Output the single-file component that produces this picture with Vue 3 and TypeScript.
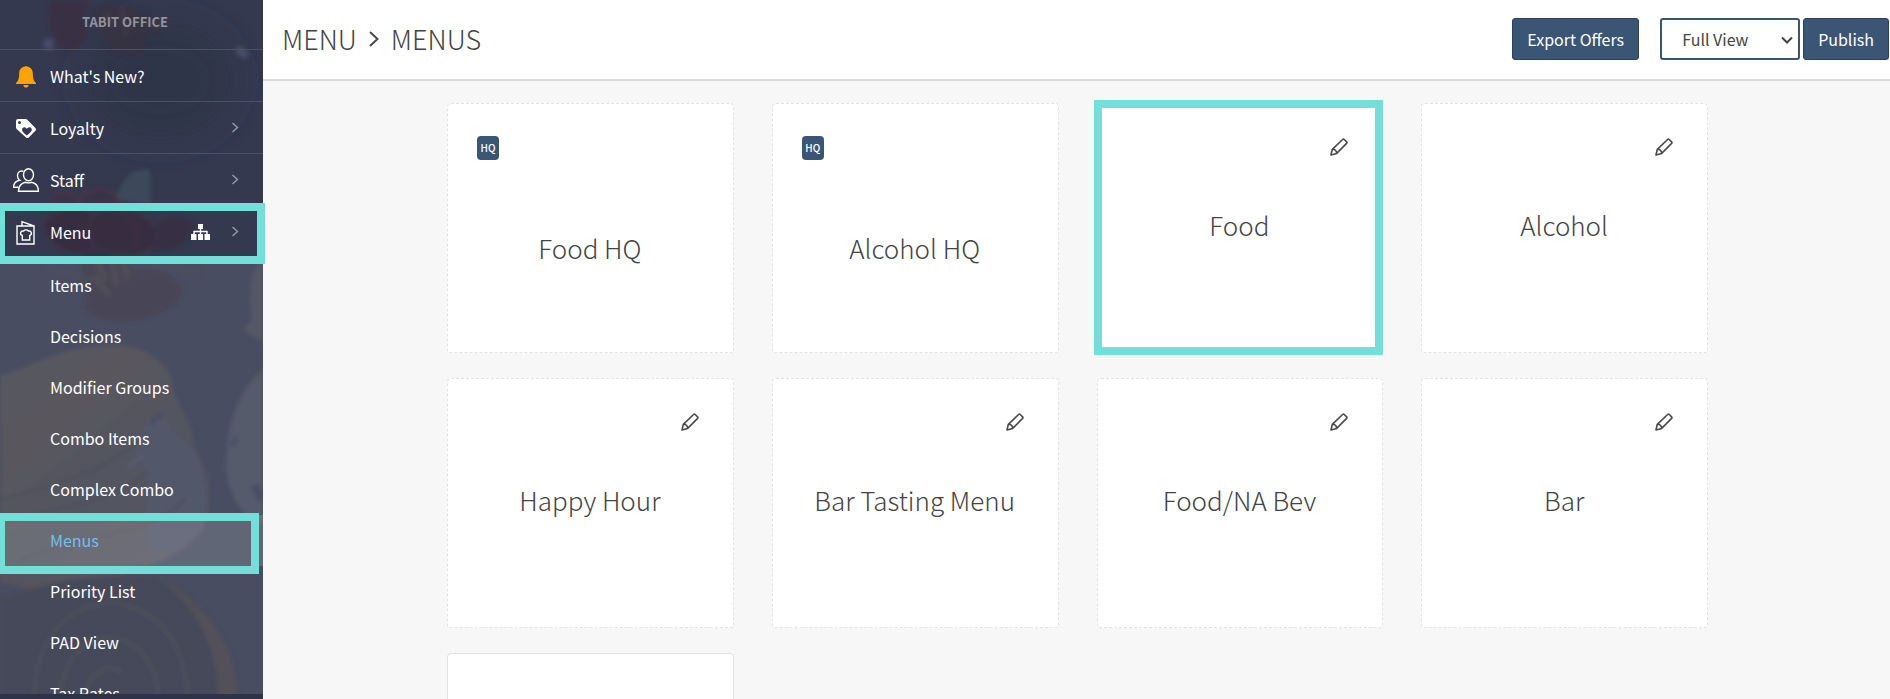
<script setup lang="ts">
import { ref } from 'vue'

interface NavItem { label: string; icon: 'bell' | 'tag' | 'staff' | 'menu'; expandable: boolean; marked?: boolean }
interface Tile { name: string; hq?: boolean; marked?: boolean }

const nav: NavItem[] = [
  { label: "What's New?", icon: 'bell', expandable: false },
  { label: 'Loyalty', icon: 'tag', expandable: true },
  { label: 'Staff', icon: 'staff', expandable: true },
  { label: 'Menu', icon: 'menu', expandable: true, marked: true },
]
const subNav: string[] = ['Items', 'Decisions', 'Modifier Groups', 'Combo Items', 'Complex Combo', 'Menus', 'Priority List', 'PAD View', 'Tax Rates']
const current = ref('Menus')
const view = ref('Full View')
const tiles: Tile[] = [
  { name: 'Food HQ', hq: true },
  { name: 'Alcohol HQ', hq: true },
  { name: 'Food', marked: true },
  { name: 'Alcohol' },
  { name: 'Happy Hour' },
  { name: 'Bar Tasting Menu' },
  { name: 'Food/NA Bev' },
  { name: 'Bar' },
]
</script>

<template>
  <div class="app">
    <aside class="sidebar">
      <svg class="backdrop" viewBox="0 0 263 699" preserveAspectRatio="xMidYMid slice" aria-hidden="true">
        <defs>
          <filter id="soft" x="-20%" y="-20%" width="140%" height="140%"><feGaussianBlur stdDeviation="2" /></filter>
          <filter id="haze" x="-40%" y="-40%" width="180%" height="180%"><feGaussianBlur stdDeviation="16" /></filter>
          <linearGradient id="bread" x1="0" y1="0" x2="0.7" y2="1">
            <stop offset="0" stop-color="#45464e" />
            <stop offset="0.35" stop-color="#46454c" />
            <stop offset="0.6" stop-color="#40424f" />
            <stop offset="1" stop-color="#454452" />
          </linearGradient>
        </defs>
        <rect width="263" height="699" fill="#343950" />
        <ellipse cx="160" cy="80" rx="75" ry="60" fill="#2f3448" filter="url(#haze)" />
        <g filter="url(#soft)" opacity="0.75">
          <path d="M50 0C46 22 54 46 68 52C84 50 94 32 84 18L90 0Z" fill="#3a2f40" stroke="#4a3142" />
          <path d="M92 8C112 2 142 6 150 20C168 26 160 36 142 34C156 48 140 66 122 52C104 56 102 32 92 8" fill="#373140" />
          <path d="M104 12L116 26M122 8L126 36M144 22L160 26" stroke="#433b45" stroke-width="5" />
          <path d="M44 38L54 40L52 51L42 47ZM237 44L249 52L246 60L236 54Z" fill="#4d5272" />
          <path d="M116 200C122 178 132 168 150 170L151 204Z" fill="#40505e" />
          <path d="M50 203C54 190 70 186 80 203M80 203C86 184 112 184 120 203" fill="#3d3044" stroke="#563444" stroke-width="2" />
          <path d="M42 225C54 205 82 204 94 214C112 204 140 206 156 228C162 250 132 262 116 252C92 262 54 256 42 225Z" fill="#37293d" stroke="#4a3142" stroke-width="2" />
          <path d="M94 214C84 228 90 244 98 250M118 210C136 220 142 234 134 250" fill="none" stroke="#4a3142" stroke-width="2" />
          <path d="M158 222C170 211 194 216 196 228C188 246 170 254 150 252Z" fill="#372d41" />
          <path d="M82 252C102 242 128 254 132 270C160 264 188 282 180 296C170 320 108 332 84 308C92 296 80 276 82 252Z" fill="#352f3f" stroke="#3e333f" />
          <path d="M44 266C66 278 72 270 90 280M150 264L198 272" fill="none" stroke="#3c3b46" stroke-width="4" />
          <path d="M98 258L104 282M112 256L116 286M124 262L128 280M92 276L110 296" fill="none" stroke="#413b42" stroke-width="6" />
          <path d="M263 258C248 270 248 300 252 320C238 328 246 336 263 342Z" fill="#474854" />
        </g>
        <g filter="url(#soft)">
          <path d="M0 376C26 370 54 350 96 346C134 342 162 354 172 380C174 404 196 424 194 448C210 470 214 506 202 530C178 562 130 574 92 578L40 590L0 582Z" fill="url(#bread)" />
          <path d="M146 424L164 416L172 432L192 450C206 470 212 506 200 530C180 552 150 560 150 540C140 500 160 474 134 456Z" fill="#41455a" />
          <path d="M263 370C240 386 226 424 226 466C228 496 242 518 263 524Z" fill="#42485a" />
          <path d="M0 500C52 484 104 474 142 438M0 524C70 502 108 506 148 472M20 560C92 530 154 536 186 498" fill="none" stroke="#3c3d4c" stroke-width="3" />
          <path d="M128 466L144 456" stroke="#50546a" stroke-width="2" />
          <path d="M150 424L162 414M232 446L236 438" stroke="#363b52" stroke-width="5" />
          <path d="M254 486L263 500" stroke="#363b52" stroke-width="8" />
          <path d="M0 574C24 592 70 592 120 574" fill="none" stroke="#45414a" stroke-width="5" />
          <path d="M0 600C52 578 112 572 158 578C206 596 234 644 240 699H0Z" fill="#323647" />
          <path d="M158 578C208 602 238 650 238 699H218C218 650 198 606 158 578Z" fill="#3f3c47" />
          <path d="M34 699C36 624 82 598 122 604C166 614 186 652 188 699M60 699C64 650 92 632 122 640C146 648 158 672 158 699M84 699C88 670 108 664 122 672" fill="none" stroke="#373a47" stroke-width="4" />
        </g>
      </svg>

      <h2 class="brand">TABIT OFFICE</h2>
      <nav class="nav" aria-label="Main">
        <a v-for="item in nav" :key="item.label" href="#" class="row" :class="{ marked: item.marked }">
          <svg v-if="item.icon === 'bell'" class="icon" viewBox="0 0 26 26" aria-hidden="true">
            <path fill="#ffa300" d="M12 3.600a1.300 1.300 0 0 1 2 0c3.600.5 5.800 3.200 5.800 6.700 0 5.700 1 7.700 3.200 9.800v.8H3v-.8c2.200-2.100 3.200-4.100 3.200-9.800 0-3.500 2.200-6.200 5.800-6.700ZM10.200 22h5.600c-.4 1.700-1.500 2.600-2.800 2.600s-2.400-.9-2.800-2.600Z" />
          </svg>
          <svg v-else-if="item.icon === 'tag'" class="icon" viewBox="0 0 26 26" aria-hidden="true">
            <path fill="#fff" fill-rule="evenodd" d="M5 4h7.500c.6 0 1.100.2 1.500.6l8.400 8.400c.8.800.8 2 0 2.800l-6.600 6.600c-.8.800-2 .8-2.800 0L3.600 14c-.4-.4-.6-.9-.6-1.400V6c0-1.100.9-2 2-2Zm1.500 2a1.500 1.500 0 1 0 0 3 1.500 1.500 0 0 0 0-3Zm6.800 7.200c-1.700-1.700-4.300-.8-4.300 1.500 0 1.900 2.300 3.500 4.800 5.700 2.500-2.200 5-3.800 5-5.700 0-2.300-2.700-3.200-4.400-1.500l-.6.600Z" />
          </svg>
          <svg v-else-if="item.icon === 'staff'" class="icon" viewBox="0 0 26 26" fill="none" stroke="#fff" stroke-width="1.400" aria-hidden="true">
            <ellipse cx="15.500" cy="7.700" rx="5" ry="6" />
            <path d="M5.500 24.300h20c0-5.300-2.800-8-7-9a9 9 0 0 1-6 0c-4.200 1-7 3.700-7 9Z" />
            <path d="M10.500 4.300C7.300 3.300 4.300 5 4.500 9c.1 2 .9 3.500 2.200 4.300-3.700.8-6.200 3-6.200 7h5" />
          </svg>
          <svg v-else class="icon" viewBox="0 0 26 26" fill="none" stroke="#fff" stroke-width="1.400" aria-hidden="true">
            <path d="M4 7h17v18H4ZM9 7V2.700L21 7" />
            <path d="M9.300 16.500c-3-1-1.800-5 1.200-4.500 1.200-1.500 3.800-1.500 5 0 3-.5 4.200 3.500 1.200 4.500V21H9.300Z" />
          </svg>
          <span class="label">{{ item.label }}</span>
          <svg v-if="item.marked" class="tree" viewBox="0 0 19 16" fill="#fff" aria-hidden="true">
            <path d="M7 0h5v5h-1.800v1.800h6.500V10H19v6h-5.500v-6h1.700V8.200h-5V10H12v6H7v-6h1.800V8.200h-5V10h1.700v6H0v-6h2.300V6.800h6.500V5H7Z" />
          </svg>
          <svg v-if="item.expandable" class="chevron" viewBox="0 0 8 12" fill="none" stroke="#929daa" stroke-width="1.400" aria-hidden="true">
            <path d="M1.500 1 6.500 5.500 1.500 10" />
          </svg>
        </a>
      </nav>
      <nav class="subnav" aria-label="Menu">
        <a v-for="item in subNav" :key="item" href="#" class="subrow" :class="{ active: item === current }" @click.prevent="current = item">{{ item }}</a>
      </nav>
      <div class="foot"></div>
    </aside>

    <div class="content">
      <header class="topbar">
        <h1 class="title">
          <span>MENU</span>
          <svg class="sep" viewBox="0 0 10 16" fill="none" stroke="#4a4a4a" stroke-width="2" aria-hidden="true"><path d="M1 1 8.500 8 1 15" /></svg>
          <span>MENUS</span>
        </h1>
        <button type="button" class="btn export">Export Offers</button>
        <div class="picker">
          <select v-model="view" aria-label="View">
            <option>Full View</option>
            <option>Compact View</option>
          </select>
          <svg class="caret" viewBox="0 0 12 8" fill="none" stroke="#444" stroke-width="2" aria-hidden="true"><path d="M1 1.500 6 6.500 11 1.500" /></svg>
        </div>
        <button type="button" class="btn">Publish</button>
      </header>

      <main class="grid">
        <article v-for="tile in tiles" :key="tile.name" class="tile" :class="{ hq: tile.hq, marked: tile.marked }">
          <span v-if="tile.hq" class="badge">HQ</span>
          <button v-else type="button" class="edit" :aria-label="'Edit ' + tile.name">
            <svg viewBox="0 0 18 18" fill="none" stroke="#4a4a4a" stroke-width="1.600" stroke-linejoin="round" aria-hidden="true">
              <path d="M1 17 2.300 11.300 12.600 1.500q.8-.8 1.600 0l2.400 2.300q.8.800 0 1.600L6.700 15.400ZM2.300 11.300c2.500 0 4.200 1.500 4.400 4.100" />
            </svg>
          </button>
          <h3 class="name">{{ tile.name }}</h3>
        </article>
        <article class="tile blank"></article>
      </main>
    </div>
  </div>
</template>

<style>
body {
  margin: 0;
}
</style>

<style scoped>
.app {
  display: flex;
  height: 100vh;
  overflow: hidden;
  background: #f7f7f7;
  color: #444;
  font-family: "Noto Sans CJK SC", "Noto Sans", sans-serif;
  font-size: 16px;
}
.app * {
  box-sizing: border-box;
}
.sidebar {
  position: relative;
  z-index: 1;
  flex: 0 0 263px;
  display: flex;
  flex-direction: column;
  background: #343950;
}
.backdrop {
  position: absolute;
  inset: 0;
  width: 100%;
  height: 100%;
}
.brand {
  position: relative;
  margin: 0;
  padding: 8px 13px 0 0;
  height: 49px;
  font-size: 13px;
  line-height: 28px;
  font-weight: 700;
  text-align: center;
  color: #94929c;
}
.nav {
  position: relative;
  z-index: 1;
}
.row {
  position: relative;
  display: flex;
  align-items: center;
  height: 52px;
  padding: 0 24px 0 13px;
  border-top: 1px solid #4a5066;
  color: #fff;
  text-decoration: none;
}
.row.marked {
  height: 53px;
  border-top-color: transparent;
}
.row.marked::after {
  content: "";
  position: absolute;
  inset: -3px -2px -6px 0;
  border: 8px solid #74dfd8;
  border-left-width: 5px;
}
.icon {
  width: 26px;
  height: 26px;
  margin-right: 11px;
}
.label {
  flex: 1;
}
.tree {
  width: 19px;
  height: 16px;
  margin-right: 21px;
}
.chevron {
  width: 8px;
  height: 12px;
}
.subnav {
  position: relative;
  flex: 1;
  min-height: 0;
  padding-top: 2px;
  overflow: hidden;
  background: rgba(255, 255, 255, 0.1);
}
.subrow {
  position: relative;
  display: block;
  height: 51px;
  padding-left: 50px;
  line-height: 50px;
  color: #fff;
  text-decoration: none;
}
.subrow.active {
  color: #78bcf0;
  background: rgba(255, 255, 255, 0.14);
}
.subrow.active::after {
  content: "";
  position: absolute;
  inset: -2px 4px -8px 0;
  border: 8px solid #74dfd8;
  border-left-width: 5px;
}
.foot {
  position: relative;
  height: 5px;
  background: #2e3348;
}
.content {
  flex: 1;
  min-width: 0;
}
.topbar {
  display: flex;
  align-items: center;
  height: 81px;
  padding: 0 1px 2px 19px;
  background: #fff;
  border-bottom: 2px solid #dcdcdc;
}
.title {
  display: flex;
  align-items: center;
  gap: 12px;
  flex: 1;
  margin: 0;
  font-size: 27px;
  line-height: 40px;
  font-weight: 300;
}
.sep {
  width: 10px;
  height: 16px;
}
.btn {
  height: 42px;
  padding: 0 14px;
  border: 1px solid #2c435a;
  border-radius: 3px;
  background: #3a5674;
  color: #fff;
  font: inherit;
}
.export {
  margin-right: 21px;
}
.picker {
  position: relative;
  margin-right: 3px;
}
.picker select {
  appearance: none;
  display: block;
  width: 140px;
  height: 42px;
  padding: 0 20px;
  border: 2px solid #3a5674;
  border-radius: 3px;
  background: #fff;
  color: #444;
  font: inherit;
}
.caret {
  position: absolute;
  right: 7px;
  top: 18px;
  width: 12px;
  height: 8px;
  pointer-events: none;
}
.grid {
  display: grid;
  grid-template-columns: repeat(4, 1fr);
  grid-auto-rows: 250px;
  gap: 25px 38px;
  padding: 22px 182px 0 184px;
}
.tile {
  position: relative;
  display: flex;
  flex-direction: column;
  padding: 31px 34px 0 29px;
  border: 1px dashed #e2e2e2;
  border-radius: 4px;
  background: #fff;
}
.tile.hq {
  padding-top: 32px;
}
.tile.blank {
  border-style: solid;
}
.tile.marked::after {
  content: "";
  position: absolute;
  inset: -4px -1px -3px -4px;
  border: 8px solid #74dfd8;
}
.badge {
  width: 22px;
  height: 24px;
  border-radius: 4px;
  background: #3a5674;
  color: #fff;
  font-size: 10px;
  font-weight: 500;
  line-height: 24px;
  text-align: center;
}
.edit {
  align-self: flex-end;
  width: 18px;
  height: 24px;
  padding: 0;
  border: 0;
  background: none;
}
.edit svg {
  display: block;
  width: 18px;
  height: 18px;
}
.name {
  margin: 46px 0 0 4px;
  font-size: 26px;
  line-height: 40px;
  font-weight: 300;
  text-align: center;
}
.hq .name {
  margin-top: 68px;
}
</style>
